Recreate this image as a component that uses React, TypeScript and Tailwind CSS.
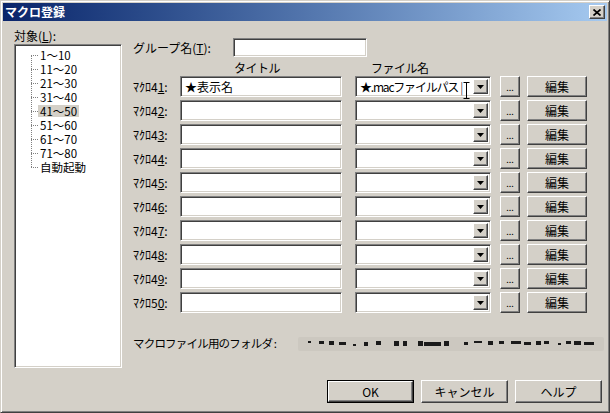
import React from "react";

const field =
  "bg-white border border-t-[#808080] border-l-[#808080] border-b-white border-r-white shadow-[inset_1px_1px_0_#404040,inset_-1px_-1px_0_#d4d0c8]";
const raised =
  "bg-[#d4d0c8] border border-t-white border-l-white border-b-[#404040] border-r-[#404040] shadow-[inset_-1px_-1px_0_#808080]";

const treeItems = ["1〜10", "11〜20", "21〜30", "31〜40", "41〜50", "51〜60", "61〜70", "71〜80", "自動起動"];

const rows = [41, 42, 43, 44, 45, 46, 47, 48, 49, 50];

// blurred path: [x, width, top, height]
const blur: [number, number, number, number][] = [
  [307, 3, 3, 2], [318, 5, 3, 3], [328, 5, 3, 4], [338, 7, 4, 3], [352, 3, 6, 2],
  [363, 4, 4, 4], [375, 5, 3, 4], [393, 5, 3, 5], [402, 4, 3, 5], [417, 5, 3, 5],
  [423, 17, 4, 4], [443, 5, 3, 5], [463, 4, 4, 3], [473, 8, 3, 2], [487, 5, 3, 4],
  [498, 5, 3, 3], [510, 10, 3, 3], [523, 7, 4, 3], [535, 5, 3, 4], [543, 5, 3, 3],
  [557, 3, 5, 2], [565, 5, 3, 3], [573, 7, 3, 4], [583, 10, 4, 3],
];

function Underline({ text, u, rest }: { text: string; u: string; rest: string }) {
  return (
    <span>
      {text}
      <span className="underline underline-offset-1">{u}</span>
      {rest}
    </span>
  );
}

function Arrow() {
  return (
    <svg width="7" height="4" viewBox="0 0 7 4">
      <path d="M0 0h7L3.5 4z" fill="#000" />
    </svg>
  );
}

function Combo({ text }: { text?: string }) {
  return (
    <div className={`${field} relative w-[136px] h-[21px] flex items-center p-[2px]`}>
      <div className="flex-1 pl-[2px] whitespace-nowrap">
        {text && (
          <span className="tracking-[-1.2px]">
            {text}
            <span className="ml-[2px] font-light">|</span>
          </span>
        )}
      </div>
      <div className={`${raised} w-[15px] h-full flex items-center justify-center`}>
        <Arrow />
      </div>
    </div>
  );
}

export default function App() {
  return (
    <div className="w-[610px] h-[413px] bg-[#d4d0c8] border border-t-[#d4d0c8] border-l-[#d4d0c8] border-b-[#404040] border-r-[#404040] shadow-[inset_1px_1px_0_#fff,inset_-1px_-1px_0_#808080] p-[2px] flex flex-col text-[12px] leading-none text-black font-['Noto_Sans_CJK_JP',sans-serif] overflow-hidden">
      {/* Title bar */}
      <div className="h-[18px] bg-gradient-to-r from-[#0a246a] to-[#a6caf0] flex items-center justify-between pl-[2px] pr-[2px]">
        <span className="text-white font-bold text-[12px]">マクロ登録</span>
        <div className={`${raised} w-[16px] h-[14px] flex items-center justify-center`}>
          <svg width="8" height="7" viewBox="0 0 8 7">
            <path d="M0.5 0.5L7.5 6.5M7.5 0.5L0.5 6.5" stroke="#000" strokeWidth="1.7" />
          </svg>
        </div>
      </div>

      <div className="flex">
        {/* Left column */}
        <div className="ml-[11px] flex flex-col">
          <div className="mt-[9px] h-[12px]">
            <Underline text="対象(" u="L" rest="):" />
          </div>
          <div className={`${field} mt-[2px] w-[108px] h-[324px] p-[2px]`}>
            <div className="relative pt-[1px]">
              <div className="absolute left-[14px] top-[8px] h-[112px] border-l border-dotted border-[#808080]" />
              {treeItems.map((t) => (
                <div key={t} className="h-[14px] flex items-center pl-[14px]">
                  <span className="w-[7px] border-t border-dotted border-[#808080]" />
                  <span
                    className={`px-[2px] leading-[12px] text-[11.5px] ${t === "41〜50" ? "bg-[#d4d0c8]" : ""}`}
                  >
                    {t}
                  </span>
                </div>
              ))}
            </div>
          </div>
        </div>

        {/* Right column */}
        <div className="ml-[10px] flex flex-col">
          <div className="mt-[17px] flex items-center h-[19px]">
            <div className="w-[101px] pl-[1px]">
              <Underline text="グループ名(" u="T" rest="):" />
            </div>
            <div className={`${field} w-[134px] h-[19px]`} />
          </div>

          <div className="h-[19px] flex pt-[5px]">
            <div className="w-[102px]" />
            <div className="w-[137px] tracking-[-0.5px]">タイトル</div>
            <div className="tracking-[-0.5px]">ファイル名</div>
          </div>

          <div className="flex flex-col gap-[3px]">
            {rows.map((n, i) => (
              <div key={n} className="flex items-center h-[21px]">
                <div className="w-[48px] pl-[1px] whitespace-nowrap">
                  ﾏｸﾛ{String(n)[0]}
                  <span className="underline underline-offset-1">{String(n)[1]}</span>:
                </div>
                <div className={`${field} w-[162px] h-[21px] flex items-center pl-[4px]`}>
                  {i === 0 ? "★表示名" : ""}
                </div>
                <div className="ml-[13px] relative">
                  <Combo text={i === 0 ? "★.macファイルパス" : undefined} />
                  {i === 0 && (
                    <svg className="absolute left-[108px] top-[6px]" width="7" height="17" viewBox="0 0 7 17">
                      <path d="M0.5 0.5h2.5h1h2.5M3.5 0.5v16M0.5 16.5h6" stroke="#000" strokeWidth="1" fill="none" />
                    </svg>
                  )}
                </div>
                <div className={`${raised} ml-[9px] w-[20px] h-[21px] flex items-end justify-center pb-[4px] text-[9px]`}>
                  ...
                </div>
                <div className={`${raised} ml-[7px] w-[60px] h-[21px] flex items-center justify-center`}>
                  編集
                </div>
              </div>
            ))}
          </div>

          <div className="mt-[24px] flex items-center h-[14px] relative">
            <div className="w-[166px] pl-[1px] text-[11.5px] tracking-[-0.8px] whitespace-nowrap">
              マクロファイル用のフォルダ :
            </div>
            <div className="relative h-[14px] w-[306px] bg-[#ccc8c0] rounded-[2px] blur-[0.3px]">
              {blur.map(([x, w, t, h], k) => (
                <span
                  key={k}
                  className="absolute bg-[#1a1a1a]"
                  style={{ left: x - 297, width: w, top: t + 1, height: h }}
                />
              ))}
            </div>
          </div>
        </div>
      </div>

      {/* Buttons */}
      <div className="mt-auto mb-[7px] flex justify-end gap-[7px] pr-[5px]">
        <div className="border border-black">
          <div className={`${raised} w-[85px] h-[21px] flex items-center justify-center`}>OK</div>
        </div>
        <div className={`${raised} w-[87px] h-[23px] flex items-center justify-center`}>キャンセル</div>
        <div className={`${raised} w-[87px] h-[23px] flex items-center justify-center`}>ヘルプ</div>
      </div>
    </div>
  );
}
